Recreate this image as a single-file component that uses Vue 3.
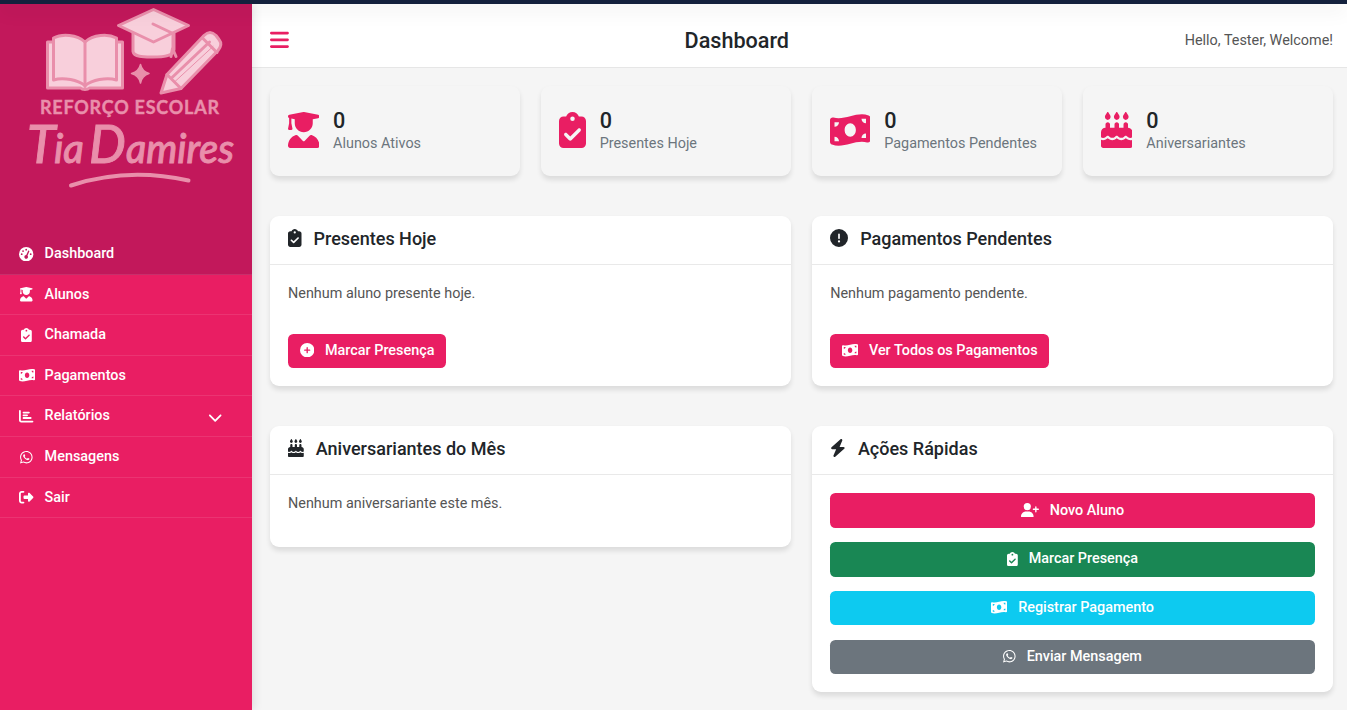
<script setup>
const icons = {
  gauge: [512, 'M0 256a256 256 0 1 1 512 0A256 256 0 1 1 0 256zM288 96a32 32 0 1 0 -64 0 32 32 0 1 0 64 0zM256 416c35.3 0 64-28.7 64-64c0-17.4-6.9-33.1-18.1-44.6L366 161.7c5.3-12.1-.2-26.3-12.3-31.6s-26.3 .2-31.6 12.3L257.9 288c-.6 0-1.3 0-1.9 0c-35.3 0-64 28.7-64 64s28.7 64 64 64zM176 144a32 32 0 1 0 -64 0 32 32 0 1 0 64 0zM96 288a32 32 0 1 0 0-64 32 32 0 1 0 0 64zm352-32a32 32 0 1 0 -64 0 32 32 0 1 0 64 0z'],
  graduate: [448, 'M219.3 .5c3.1-.6 6.3-.6 9.4 0l200 40C439.9 42.7 448 52.6 448 64s-8.1 21.3-19.3 23.5L352 102.9V160c0 70.7-57.3 128-128 128s-128-57.3-128-128V102.9L48 93.3v65.1l15.7 78.4c.9 4.7-.3 9.6-3.3 13.3s-7.6 5.9-12.4 5.9H16c-4.8 0-9.3-2.1-12.4-5.9s-4.3-8.6-3.3-13.3L16 158.4V86.6C6.5 83.3 0 74.3 0 64C0 52.6 8.1 42.7 19.3 40.5l200-40zM111.9 327.7c10.5-3.4 21.8 .4 29.4 8.5l71 75.5c6.3 6.7 17 6.7 23.3 0l71-75.5c7.6-8.1 18.9-11.9 29.4-8.5C401 348.6 448 409.4 448 481.3c0 17-13.8 30.7-30.7 30.7H30.7C13.8 512 0 498.2 0 481.3c0-71.9 47-132.7 111.9-153.6z'],
  clipboard: [384, 'M192 0c-41.8 0-77.4 26.7-90.5 64H64C28.7 64 0 92.7 0 128V448c0 35.3 28.7 64 64 64H320c35.3 0 64-28.7 64-64V128c0-35.3-28.7-64-64-64H282.5C269.4 26.7 233.8 0 192 0zm0 64a32 32 0 1 1 0 64 32 32 0 1 1 0-64zM305 273L177 401c-9.4 9.4-24.6 9.4-33.9 0L79 337c-9.4-9.4-9.4-24.6 0-33.9s24.6-9.4 33.9 0l47 47L271 239c9.4-9.4 24.6-9.4 33.9 0s9.4 24.6 0 33.9z'],
  money: [576, 'M0 112.5V422.3c0 18 10.1 35 27 41.3c87 32.5 174 10.3 261-11.9c79.8-20.3 159.6-40.7 239.3-18.9c23 6.3 48.7-9.5 48.7-33.4V89.7c0-18-10.1-35-27-41.3C462 15.9 375 38.1 288 60.3C208.2 80.6 128.4 100.9 48.7 79.1C25.6 72.8 0 88.6 0 112.5zM288 352c-44.2 0-80-43-80-96s35.8-96 80-96s80 43 80 96s-35.8 96-80 96zM64 352c35.3 0 64 28.7 64 64H64V352zm64-208c0 35.3-28.7 64-64 64V144h64zM512 304v64H448c0-35.3 28.7-64 64-64zM448 96h64v64c-35.3 0-64-28.7-64-64z'],
  cake: [448, 'M86.4 5.5L61.8 47.6C58 54.1 56 61.6 56 69.2V72c0 22.1 17.9 40 40 40s40-17.9 40-40V69.2c0-7.6-2-15-5.8-21.6L105.6 5.5C103.6 2.1 100 0 96 0s-7.6 2.1-9.6 5.5zm128 0L189.8 47.6c-3.8 6.5-5.8 14-5.8 21.6V72c0 22.1 17.9 40 40 40s40-17.9 40-40V69.2c0-7.6-2-15-5.8-21.6L233.6 5.5C231.6 2.1 228 0 224 0s-7.6 2.1-9.6 5.5zM317.8 47.6c-3.8 6.5-5.8 14-5.8 21.6V72c0 22.1 17.9 40 40 40s40-17.9 40-40V69.2c0-7.6-2-15-5.8-21.6L361.6 5.5C359.6 2.1 356 0 352 0s-7.6 2.1-9.6 5.5L317.8 47.6zM128 176c0-17.7-14.3-32-32-32s-32 14.3-32 32v48c-35.3 0-64 28.7-64 64v71c8.3 5.2 18.1 9 28.8 9c13.5 0 27.2-6.1 38.4-13.4c5.4-3.5 9.9-7.1 13-9.7c1.5-1.3 2.7-2.4 3.5-3.1c.4-.4 .7-.6 .8-.8c3.1-3.2 7.5-5 12-4.9s8.6 2.1 11.6 5.4c.1 .1 .4 .4 .8 .8c.7 .7 1.7 1.7 3.1 3c2.8 2.6 6.8 6.1 11.8 9.5c10.2 7.1 23 13.1 36.3 13.1s26.1-6 36.3-13.1c5-3.5 9-6.9 11.8-9.5c1.4-1.3 2.4-2.3 3.1-3c.3-.3 .6-.6 .8-.8c3-3.5 7.4-5.4 12-5.4s9 2 12 5.4c.1 .1 .4 .4 .8 .8c.7 .7 1.7 1.7 3.1 3c2.8 2.6 6.8 6.1 11.8 9.5c10.2 7.1 23 13.1 36.3 13.1s26.1-6 36.3-13.1c5-3.5 9-6.9 11.8-9.5c1.4-1.3 2.4-2.3 3.1-3c.3-.3 .6-.6 .8-.8c2.9-3.4 7.1-5.3 11.6-5.4s8.7 1.6 12 4.9c.2 .2 .4 .4 .8 .8c.8 .7 1.9 1.8 3.5 3.1c3.1 2.6 7.5 6.2 13 9.7c11.2 7.3 24.9 13.4 38.4 13.4c10.7 0 20.5-3.9 28.8-9V288c0-35.3-28.7-64-64-64V176c0-17.7-14.3-32-32-32s-32 14.3-32 32v48H256V176c0-17.7-14.3-32-32-32s-32 14.3-32 32v48H128V176zM448 394.6c-8.5 3.3-18.2 5.4-28.8 5.4c-22.5 0-42.4-9.9-55.8-18.6c-4.1-2.7-7.8-5.4-10.9-7.8c-2.8 2.4-6.1 5-9.8 7.5C329.8 390 310.6 400 288 400s-41.8-10-54.6-18.9c-3.5-2.4-6.7-4.9-9.4-7.2c-2.7 2.3-5.9 4.7-9.4 7.2C201.8 390 182.6 400 160 400s-41.8-10-54.6-18.9c-3.7-2.6-7-5.2-9.8-7.5c-3.1 2.4-6.8 5.1-10.9 7.8C71.2 390.1 51.3 400 28.8 400c-10.6 0-20.3-2.2-28.8-5.4V480c0 17.7 14.3 32 32 32H416c17.7 0 32-14.3 32-32V394.6z'],
  chart: [512, 'M32 32c17.7 0 32 14.3 32 32V400c0 8.8 7.2 16 16 16H480c17.7 0 32 14.3 32 32s-14.3 32-32 32H80c-44.2 0-80-35.8-80-80V64C0 46.3 14.3 32 32 32zm96 96c0-17.7 14.3-32 32-32l192 0c17.7 0 32 14.3 32 32s-14.3 32-32 32H160c-17.7 0-32-14.3-32-32zm32 64H288c17.7 0 32 14.3 32 32s-14.3 32-32 32H160c-17.7 0-32-14.3-32-32s14.3-32 32-32zm0 96H416c17.7 0 32 14.3 32 32s-14.3 32-32 32H160c-17.7 0-32-14.3-32-32s14.3-32 32-32z'],
  chevron: [512, 'M233.4 406.6c12.5 12.5 32.8 12.5 45.3 0l192-192c12.5-12.5 12.5-32.8 0-45.3s-32.8-12.5-45.3 0L256 338.7 86.6 169.4c-12.5-12.5-32.8-12.5-45.3 0s-12.5 32.8 0 45.3l192 192z'],
  whatsapp: [448, 'M380.9 97.1C339 55.1 283.2 32 223.9 32c-122.4 0-222 99.6-222 222 0 39.1 10.2 77.3 29.6 111L0 480l117.7-30.9c32.4 17.7 68.9 27 106.1 27h.1c122.3 0 224.1-99.6 224.1-222 0-59.3-25.2-115-67.1-157zm-157 341.6c-33.2 0-65.7-8.9-94-25.7l-6.7-4-69.8 18.3L72 359.2l-4.4-7c-18.5-29.4-28.2-63.3-28.2-98.2 0-101.7 82.8-184.5 184.6-184.5 49.3 0 95.6 19.2 130.4 54.1 34.8 34.9 56.2 81.2 56.1 130.5 0 101.8-84.9 184.6-186.6 184.6zm101.2-138.2c-5.5-2.8-32.8-16.2-37.9-18-5.1-1.9-8.8-2.8-12.5 2.8-3.7 5.6-14.3 18-17.6 21.8-3.2 3.7-6.5 4.2-12 1.4-32.6-16.3-54-29.1-75.5-66-5.7-9.8 5.7-9.1 16.3-30.3 1.8-3.7.9-6.9-.5-9.7-1.4-2.8-12.5-30.1-17.1-41.2-4.5-10.8-9.1-9.3-12.5-9.5-3.2-.2-6.9-.2-10.6-.2-3.7 0-9.7 1.4-14.8 6.9-5.1 5.6-19.4 19-19.4 46.3 0 27.3 19.9 53.7 22.6 57.4 2.8 3.7 39.1 59.7 94.8 83.8 35.2 15.2 49 16.5 66.6 13.9 10.7-1.6 32.8-13.4 37.4-26.4 4.6-13 4.6-24.1 3.2-26.4-1.3-2.5-5-3.9-10.5-6.6z'],
  exit: [512, 'M377.9 105.9L500.7 228.7c7.2 7.2 11.3 17.1 11.3 27.3s-4.1 20.1-11.3 27.3L377.9 406.1c-6.4 6.4-15 9.9-24 9.9c-18.7 0-33.9-15.2-33.9-33.9l0-62.1-128 0c-17.7 0-32-14.3-32-32l0-64c0-17.7 14.3-32 32-32l128 0 0-62.1c0-18.7 15.2-33.9 33.9-33.9c9 0 17.6 3.6 24 9.9zM160 96L96 96c-17.7 0-32 14.3-32 32l0 256c0 17.7 14.3 32 32 32l64 0c17.7 0 32 14.3 32 32s-14.3 32-32 32l-64 0c-53 0-96-43-96-96L0 128C0 75 43 32 96 32l64 0c17.7 0 32 14.3 32 32s-14.3 32-32 32z'],
  bars: [448, 'M0 96C0 78.3 14.3 64 32 64H416c17.7 0 32 14.3 32 32s-14.3 32-32 32H32C14.3 128 0 113.7 0 96zM0 256c0-17.7 14.3-32 32-32H416c17.7 0 32 14.3 32 32s-14.3 32-32 32H32c-17.7 0-32-14.3-32-32zM448 416c0 17.7-14.3 32-32 32H32c-17.7 0-32-14.3-32-32s14.3-32 32-32H416c17.7 0 32 14.3 32 32z'],
  plus: [512, 'M256 512A256 256 0 1 0 256 0a256 256 0 1 0 0 512zM232 344V280H168c-13.3 0-24-10.7-24-24s10.7-24 24-24h64V168c0-13.3 10.7-24 24-24s24 10.7 24 24v64h64c13.3 0 24 10.7 24 24s-10.7 24-24 24H280v64c0 13.3-10.7 24-24 24s-24-10.7-24-24z'],
  alert: [512, 'M256 512A256 256 0 1 0 256 0a256 256 0 1 0 0 512zm0-384c13.3 0 24 10.7 24 24V264c0 13.3-10.7 24-24 24s-24-10.7-24-24V152c0-13.3 10.7-24 24-24zM224 352a32 32 0 1 1 64 0 32 32 0 1 1 -64 0z'],
  bolt: [448, 'M349.4 44.6c5.9-13.7 1.5-29.7-10.6-38.5s-28.6-8-39.9 1.8l-256 224c-10 8.8-13.6 22.9-8.9 35.3S50.7 288 64 288H175.5L98.6 467.4c-5.9 13.7-1.5 29.7 10.6 38.5s28.6 8 39.9-1.8l256-224c10-8.8 13.6-22.9 8.9-35.3s-16.6-20.7-30-20.7H272.5L349.4 44.6z'],
  userPlus: [640, 'M96 128a128 128 0 1 1 256 0A128 128 0 1 1 96 128zM0 482.3C0 383.8 79.8 304 178.3 304h91.4C368.2 304 448 383.8 448 482.3c0 16.4-13.3 29.7-29.7 29.7H29.7C13.3 512 0 498.7 0 482.3zM504 312V248H440c-13.3 0-24-10.7-24-24s10.7-24 24-24h64V136c0-13.3 10.7-24 24-24s24 10.7 24 24v64h64c13.3 0 24 10.7 24 24s-10.7 24-24 24H552v64c0 13.3-10.7 24-24 24s-24-10.7-24-24z'],
}

// Renders one glyph at 1em height, keeping its own width.
const Icon = (props) => {
  const [w, d] = icons[props.name]
  return h('svg', { viewBox: `0 0 ${w} 512`, width: `${w / 512}em`, height: '1em', fill: 'currentColor' }, [h('path', { d })])
}
Icon.props = ['name']

const menu = [
  { icon: 'gauge', label: 'Dashboard', active: true },
  { icon: 'graduate', label: 'Alunos' },
  { icon: 'clipboard', label: 'Chamada' },
  { icon: 'money', label: 'Pagamentos' },
  { icon: 'chart', label: 'Relatórios', expandable: true },
  { icon: 'whatsapp', label: 'Mensagens' },
  { icon: 'exit', label: 'Sair' },
]
const stats = [
  { icon: 'graduate', label: 'Alunos Ativos' },
  { icon: 'clipboard', label: 'Presentes Hoje' },
  { icon: 'money', label: 'Pagamentos Pendentes' },
  { icon: 'cake', label: 'Aniversariantes' },
]
const cards = [
  { icon: 'clipboard', title: 'Presentes Hoje', text: 'Nenhum aluno presente hoje.', btn: 'Marcar Presença', btnIcon: 'plus' },
  { icon: 'alert', title: 'Pagamentos Pendentes', text: 'Nenhum pagamento pendente.', btn: 'Ver Todos os Pagamentos', btnIcon: 'money' },
  { icon: 'cake', title: 'Aniversariantes do Mês', text: 'Nenhum aniversariante este mês.' },
]
const actions = [
  { icon: 'userPlus', label: 'Novo Aluno', tone: 'primary' },
  { icon: 'clipboard', label: 'Marcar Presença', tone: 'success' },
  { icon: 'money', label: 'Registrar Pagamento', tone: 'info' },
  { icon: 'whatsapp', label: 'Enviar Mensagem', tone: 'secondary' },
]
</script>

<script>
import { h } from 'vue'
</script>

<template>
  <div class="page">
    <div class="strip"></div>
    <aside class="sidebar">
      <div class="brand">
        <svg class="logo" viewBox="0 0 252 196" width="252" height="196">
          <g fill="#f8cfdb" stroke="#e98fab" stroke-width="3" stroke-linejoin="round" stroke-linecap="round">
            <path d="M47.500 38.500H122.500V84.500H89.500C87.500 86.500 82.500 86.500 80.500 84.500H47.500Z" />
            <path d="M53.500 34.500C62 30 77 31 85 38.500C93 31 108 30 116.500 34.500V76.500C106 73 92 77 85 82C78 77 64 73 53.500 76.500Z" />
            <path d="M85 39V83" fill="none" />
            <path d="M133 29V48C134 54 145 53.500 153 53.500C162 53.500 174 53 174 46V30" />
            <path d="M153.500 6L188.500 22L153.500 38.500L118.500 22Z" />
            <path d="M153 20.500L173 30V45M172.500 45L171 53M172.500 45L176 53" fill="none" />
            <path d="M167 71L204 32Q210 26 216 32L219 36Q223 41 218 47L181 85L161 89.500Z" />
            <path d="M203 35L217 49M167 71L181 85M171 75L209.500 38.500" fill="none" />
            <path d="M175 78L213 43" fill="none" stroke-width="1" />
          </g>
          <path d="M140.500 61Q142 68 149 70Q142 72 140.500 79.500Q139 72 131.500 70Q139 68 140.500 61Z" fill="#e98fab" stroke="#e98fab" stroke-width="1.500" stroke-linejoin="round" />
          <text class="logo-caps" x="40" y="110.500" textLength="179" lengthAdjust="spacing">REFORÇO ESCOLAR</text>
          <text class="logo-name" y="159"><tspan class="cap" x="27">T</tspan><tspan x="54">ia</tspan></text>
          <text class="logo-name" y="159"><tspan class="cap" x="89">D</tspan><tspan x="126" textLength="108" lengthAdjust="spacingAndGlyphs">amires</tspan></text>
          <path d="M71 182Q127 163.500 188.500 177" fill="none" stroke="#e98fab" stroke-width="4" stroke-linecap="round" />
        </svg>
      </div>
      <nav class="menu">
        <a v-for="m in menu" :key="m.label" class="item" :class="{ active: m.active }">
          <span class="item-icon"><Icon :name="m.icon" /></span>
          <span>{{ m.label }}</span>
          <Icon v-if="m.expandable" class="caret" name="chevron" />
        </a>
      </nav>
    </aside>

    <div class="main">
      <header class="topbar">
        <Icon class="toggle" name="bars" />
        <h1>Dashboard</h1>
        <span class="hello">Hello, Tester, Welcome!</span>
      </header>
      <main class="content">
        <section class="stats">
          <div v-for="s in stats" :key="s.label" class="stat">
            <Icon class="stat-icon" :name="s.icon" />
            <div>
              <div class="num">0</div>
              <div class="stat-label">{{ s.label }}</div>
            </div>
          </div>
        </section>
        <section class="grid">
          <article v-for="c in cards" :key="c.title" class="card">
            <h2><Icon :name="c.icon" /><span>{{ c.title }}</span></h2>
            <div class="body">
              <p>{{ c.text }}</p>
              <button v-if="c.btn" class="btn primary spaced"><Icon :name="c.btnIcon" />{{ c.btn }}</button>
            </div>
          </article>
          <article class="card">
            <h2><Icon name="bolt" /><span>Ações Rápidas</span></h2>
            <div class="body actions">
              <button v-for="a in actions" :key="a.label" class="btn" :class="a.tone"><Icon :name="a.icon" />{{ a.label }}</button>
            </div>
          </article>
        </section>
      </main>
    </div>
  </div>
</template>

<style>
body { margin: 0; background: #f5f5f5; overflow: hidden; }
</style>

<style scoped>
.page {
  display: grid;
  grid-template-columns: 252px 1fr;
  grid-template-rows: 4px 1fr;
  height: 710px;
  overflow: hidden;
  background: #f5f5f5;
  color: #212529;
  font: 400 14.4px/21.6px Roboto, sans-serif;
}
.page *, .page { box-sizing: border-box; }
svg { display: block; flex: none; }
.strip {
  grid-column: 1 / 3;
  position: relative;
  z-index: 3;
  background: #14213d;
  box-shadow: 0 4px 20px rgba(0, 0, 0, 0.15);
}
.sidebar {
  position: relative;
  z-index: 2;
  background: #e91e63;
  color: #fff;
  box-shadow: 2px 0 9px rgba(0, 0, 0, 0.1);
}
.brand { height: 230.1px; background: #c2185b; }
.logo { transform: translateY(-0.5px); }
.logo-caps { font: 700 18px Lato, sans-serif; fill: #e98fab; stroke: #e98fab; stroke-width: 0.4px; }
.logo-name { font: italic 500 40px Lato, sans-serif; fill: #e98fab; stroke: #e98fab; stroke-width: 0.9px; }
.logo-name .cap { font-size: 52px; }
.item {
  display: flex;
  align-items: center;
  height: 40.6px;
  padding: 0 29.500px 0 17.600px;
  border-bottom: 1px solid rgba(255, 255, 255, 0.1);
  font-weight: 500;
}
.item.active { background: #c2185b; }
.item-icon { display: flex; justify-content: center; width: 18px; margin-right: 9px; }
.caret { margin-left: auto; margin-top: 1px; }
.main { min-width: 0; }
.topbar {
  display: flex;
  align-items: center;
  justify-content: space-between;
  height: 64px;
  padding: 9px 14px 0 18px;
  background: #fff;
  border-bottom: 1px solid #e6e6e6;
}
.toggle { color: #e91e63; font-size: 21.6px; }
.topbar h1 { margin: 1.500px 0 0; font-size: 21.6px; line-height: 26px; font-weight: 500; }
.hello { color: #555; padding-top: 1.500px; }
.content { padding: 18px 14px 0 18px; }
.stats { display: grid; grid-template-columns: repeat(4, 1fr); gap: 21.3px; }
.stat {
  display: flex;
  align-items: flex-start;
  gap: 14px;
  height: 90px;
  padding: 22px 17.600px 0;
  border-radius: 9px;
  box-shadow: 0 3.6px 5.4px rgba(0, 0, 0, 0.1);
}
.stat-icon { color: #e91e63; font-size: 36px; margin-top: 3.700px; }
.num { font-size: 21.6px; line-height: 25.500px; font-weight: 500; }
.stat-label { margin-top: -1px; color: #6c757d; }
.grid { display: grid; grid-template-columns: 1fr 1fr; align-items: start; gap: 40px 21.3px; margin-top: 40px; }
.card { background: #fff; border-radius: 9px; box-shadow: 0 3.6px 5.4px rgba(0, 0, 0, 0.1); }
.card h2 {
  display: flex;
  align-items: center;
  gap: 12px;
  margin: 0;
  height: 49px;
  padding: 0 18px 3px;
  border-bottom: 1px solid #e9e9e9;
  font-size: 18px;
  line-height: 22px;
  font-weight: 500;
}
.card h2 svg { margin-top: -1px; }
.body { padding: 18px; }
.body p { margin: 0 0 14.4px; color: #555; }
.btn {
  display: flex;
  align-items: center;
  justify-content: center;
  gap: 10.8px;
  height: 34.4px;
  padding: 0 11.8px 0.400px;
  border: 0;
  border-radius: 5.4px;
  color: #fff;
  font: 500 14.4px/21.6px Roboto, sans-serif;
}
.btn svg { margin-top: -1px; }
.spaced { margin-top: 29.200px; }
.actions { display: flex; flex-direction: column; gap: 14.4px; padding-top: 18.300px; padding-bottom: 17.700px; }
.primary { background: #e91e63; }
.success { background: #198754; }
.info { background: #0dcaf0; }
.secondary { background: #6c757d; }
</style>
